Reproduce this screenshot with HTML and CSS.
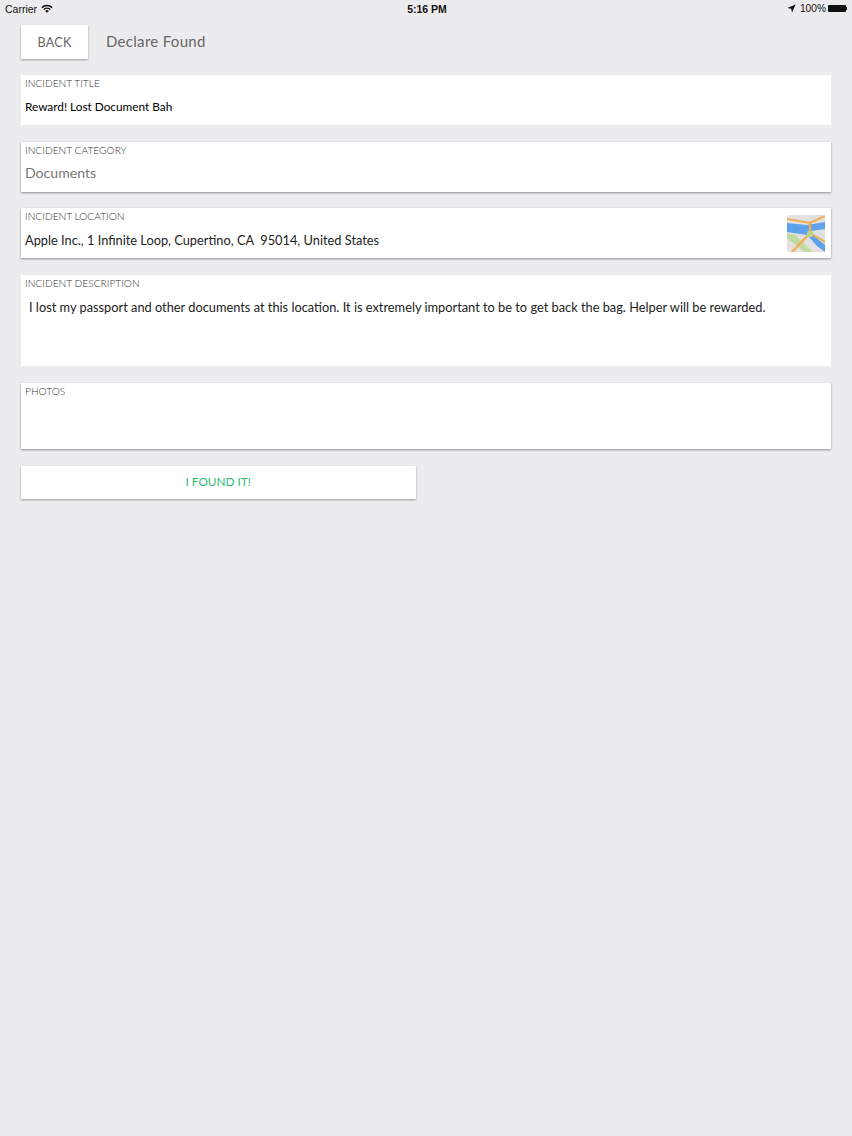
FILE: index.html
```html
<!DOCTYPE html>
<html lang="en">
<head>
    <meta charset="UTF-8">
    <meta name="viewport" content="width=device-width, initial-scale=1.0">
    <title>Declare Found</title>
    <link rel="stylesheet" href="styles.css">
</head>
<body>
    <!-- Status bar -->
    <div class="status-bar">
        <div class="status-left">
            <span>Carrier</span>
            <svg class="wifi" width="12" height="9" viewBox="0 0 12 9">
                <path d="M0.4 3 A8 8 0 0 1 11.6 3 L10.5 4.2 A6.4 6.4 0 0 0 1.5 4.2 Z" fill="#111"/>
                <path d="M2.3 5 A5.2 5.2 0 0 1 9.7 5 L8.6 6.1 A3.7 3.7 0 0 0 3.4 6.1 Z" fill="#111"/>
                <path d="M4.2 6.9 A2.6 2.6 0 0 1 7.8 6.9 L6 8.8 Z" fill="#111"/>
            </svg>
        </div>
        <div class="status-time">5:16 PM</div>
        <div class="status-right">
            <svg class="arrow" width="9" height="9" viewBox="0 0 9 9">
                <path d="M8.6 0.4 L0.4 4 L4.2 4.8 L5 8.6 Z" fill="#111"/>
            </svg>
            <span>100%</span>
            <div class="battery"></div>
        </div>
    </div>

    <!-- Header -->
    <div class="top-row">
        <button class="back-btn">BACK</button>
        <div class="page-title">Declare Found</div>
    </div>

    <!-- Form -->
    <div class="form">
        <div class="field">
            <div class="label">INCIDENT TITLE</div>
            <div class="value value-low value-strong">Reward! Lost Document Bah</div>
        </div>

        <div class="field field-shadow">
            <div class="label">INCIDENT CATEGORY</div>
            <div class="value value-muted">Documents</div>
        </div>

        <div class="field field-shadow field-location">
            <div>
                <div class="label">INCIDENT LOCATION</div>
                <div class="value value-low">Apple Inc., 1 Infinite Loop, Cupertino, CA&nbsp; 95014, United States</div>
            </div>
            <svg class="map-icon" width="38" height="37" viewBox="0 0 38 37">
                <rect width="38" height="37" rx="3" fill="#e2e1df"/>
                <path d="M0 8 L20 10 L38 7 L38 14 L24 16 L26 20 L38 30 L38 37 L30 31 L20 20 L0 17 Z" fill="#5da2ea"/>
                <path d="M0 18 L8 20 L26 37 L18 37 L0 23 Z" fill="#bfdc9e"/>
                <path d="M0 4 L23 8 L38 1" stroke="#f0ae52" stroke-width="2" fill="none"/>
                <path d="M23 8 L23 18 L5 37" stroke="#f0ae52" stroke-width="2.4" fill="none"/>
                <path d="M23 18 L38 27" stroke="#f0ae52" stroke-width="2" fill="none"/>
                <circle cx="23" cy="19" r="3.2" fill="#b9d48a"/>
            </svg>
        </div>

        <div class="field field-description">
            <div class="label">INCIDENT DESCRIPTION</div>
            <div class="value value-low value-indent">I lost my passport and other documents at this location. It is extremely important to be to get back the bag. Helper will be rewarded.</div>
        </div>

        <div class="field field-shadow field-photos">
            <div class="label">PHOTOS</div>
        </div>

        <button class="found-btn">I FOUND IT!</button>
    </div>
</body>
</html>
```

FILE: styles.css
```css
body {
    margin: 0;
    background-color: #ecebed;
    font-family: "Lato", "Open Sans", sans-serif;
    color: #111;
}
.status-bar {
    display: grid;
    grid-template-columns: 1fr auto 1fr;
    align-items: center;
    height: 17px;
    padding: 0 5px;
    font-family: "Liberation Sans", Arial, sans-serif;
    font-size: 10.5px;
}
.status-left {
    display: flex;
    align-items: center;
    gap: 4px;
}
.status-time {
    padding-left: 2px;
    font-weight: bold;
}
.status-right {
    display: flex;
    justify-content: flex-end;
    align-items: center;
    gap: 4px;
}
.status-right span {
    font-size: 10.2px;
    margin-right: -2px;
}
.battery {
    position: relative;
    width: 18px;
    height: 7px;
    margin-right: 1px;
    background-color: #111;
    border-radius: 1px;
}
/* battery nub */
.battery::after {
    content: "";
    position: absolute;
    top: 2px;
    right: -1px;
    width: 1px;
    height: 3px;
    background-color: #111;
}
.top-row {
    display: flex;
    align-items: center;
    gap: 18px;
    padding: 8px 21px 0;
}
.back-btn {
    width: 67px;
    height: 34px;
    padding: 0;
    border: none;
    background-color: #fff;
    box-shadow: 0 1px 2px rgba(0, 0, 0, 0.35);
    font-family: inherit;
    font-size: 12.5px;
    letter-spacing: 0.3px;
    color: #666;
}
.page-title {
    font-size: 15px;
    letter-spacing: 0.3px;
    line-height: 18px;
    margin-top: -2px;
    color: #666;
}
.form {
    display: flex;
    flex-direction: column;
    gap: 16.67px;
    padding: 16px 21px 40px;
}
.field {
    box-sizing: border-box;
    height: 50px;
    padding: 2px 4px 0;
    background-color: #fff;
}
.field-shadow {
    box-shadow: 0 1px 2px rgba(0, 0, 0, 0.4);
}
.field-location {
    display: flex;
    justify-content: space-between;
    padding-right: 6px;
}
.field-description {
    height: 91px;
}
.field-photos {
    height: 66.33px;
}
.label {
    font-size: 10.2px;
    font-weight: 300;
    line-height: 12px;
    color: #333;
}
.value {
    margin-top: 9px;
    font-size: 12.8px;
    line-height: 16px;
    color: #222;
}
.value-low {
    margin-top: 10px;
}
.value-strong {
    font-size: 11.8px;
    color: #000;
}
.value-muted {
    font-size: 14.1px;
    color: #777;
}
.value-indent {
    padding-left: 4px;
}
.map-icon {
    margin-top: 5px;
}
.found-btn {
    align-self: flex-start;
    width: 394.5px;
    height: 33px;
    padding: 0 0 2px;
    border: none;
    background-color: #fff;
    box-shadow: 0 1px 2px rgba(0, 0, 0, 0.35);
    font-family: inherit;
    font-size: 11.8px;
    color: #2dbb73;
}
```
